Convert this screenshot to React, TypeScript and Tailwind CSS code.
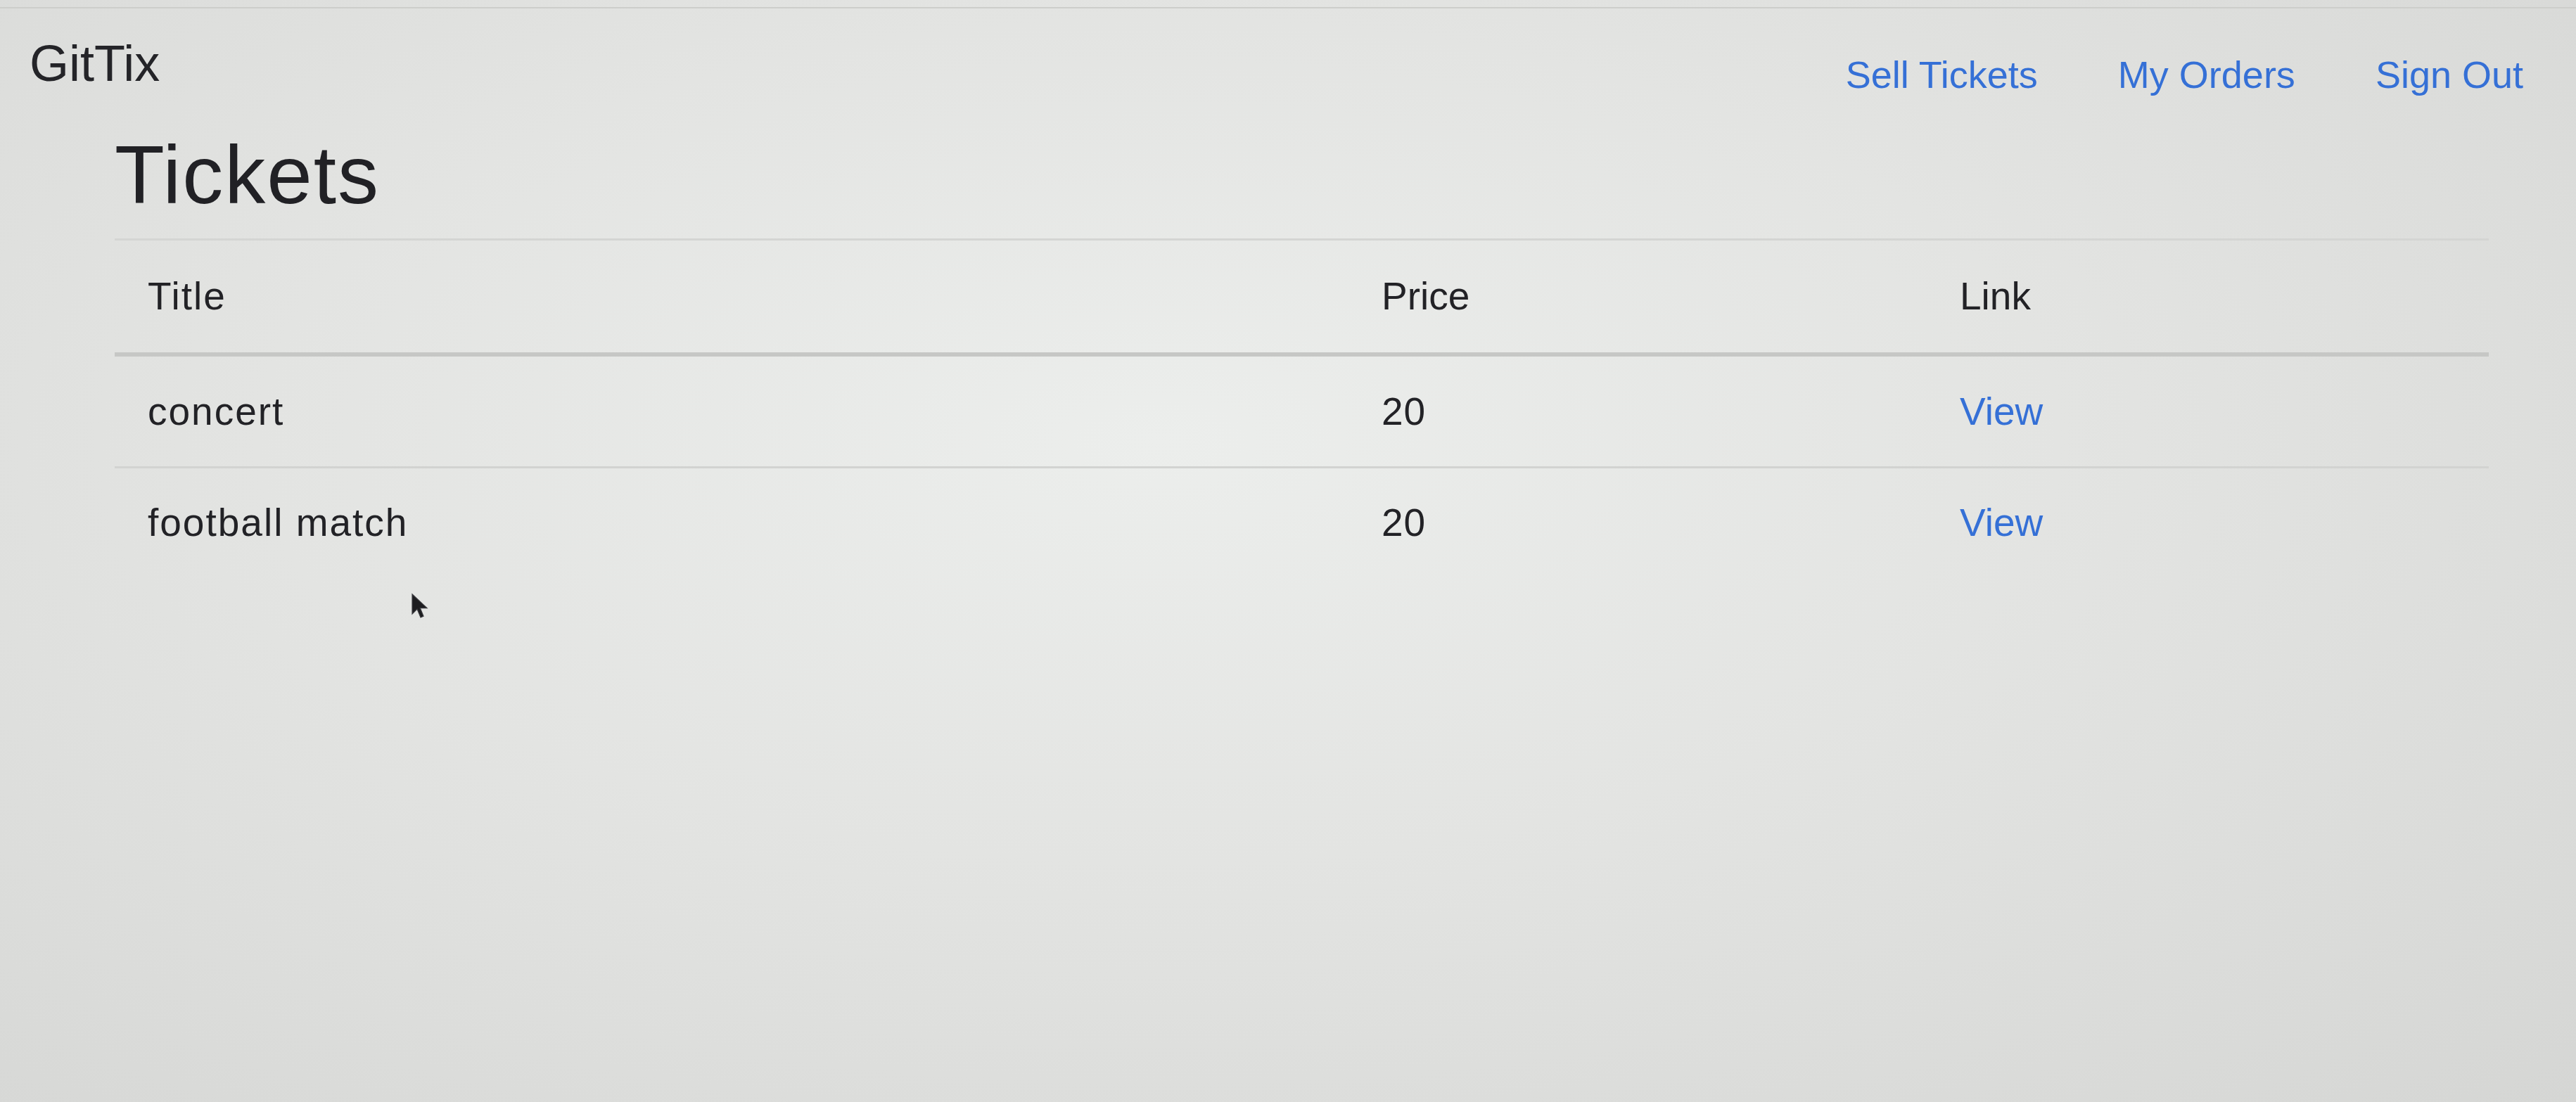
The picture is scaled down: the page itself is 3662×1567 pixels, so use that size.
import React from 'react'

const tickets = [
  { id: '1', title: 'concert', price: 20 },
  { id: '2', title: 'football match', price: 20 },
]

function Header() {
  return (
    <nav className="h-[161px] flex justify-between border-t-2 border-[#cdcecb]">
      <a className="pl-[42px] pt-[42px] text-[72px] leading-none text-[#242428]">GitTix</a>
      <ul className="flex gap-[114px] pr-[75px] pt-[67px]">
        <li><a className="text-[54px] leading-none text-[#3570d6]">Sell Tickets</a></li>
        <li><a className="text-[54px] leading-none text-[#3570d6]">My Orders</a></li>
        <li><a className="text-[54px] leading-none text-[#3570d6]">Sign Out</a></li>
      </ul>
    </nav>
  )
}

function Cursor() {
  return (
    <svg className="absolute left-[584px] top-[843px]" width="26" height="38" viewBox="0 0 13 19">
      <path d="M1 1 L1 15 L4.5 11.5 L7 17.5 L9 16.6 L6.6 10.8 L11.5 10.8 Z" fill="#1d1d20" stroke="#3a3a3e" strokeWidth="0.6" />
    </svg>
  )
}

export default function App() {
  return (
    <div
      className="relative w-[3662px] h-[1567px] overflow-hidden pt-[10px] bg-[radial-gradient(ellipse_at_45%_40%,#eceeec_0%,#e3e4e2_45%,#d5d6d4_100%)]"
      style={{ fontFamily: '"Liberation Sans", Arial, sans-serif' }}
    >
      <Header />
      <div className="ml-[163px] w-[3375px]">
        <h1 className="mt-[9px] text-[116px] leading-[1.2] tracking-[2px] text-[#212125]">Tickets</h1>
        <div className="mt-[20px] text-[55px] text-[#222226]">
          <div className="grid grid-cols-[1754px_822px_1fr] items-center h-[168px] border-t-[3px] border-b-[6px] border-t-[#d4d5d3] border-b-[#c6c7c5]">
            <div className="pl-[47px] tracking-[2px]">Title</div>
            <div className="pl-[47px]">Price</div>
            <div className="pl-[47px]">Link</div>
          </div>
          {tickets.map((t, i) => (
            <div
              key={t.id}
              className={
                i === 0
                  ? 'grid grid-cols-[1754px_822px_1fr] items-center h-[156px]'
                  : 'grid grid-cols-[1754px_822px_1fr] items-center h-[157px] border-t-[3px] border-[#d2d3d1]'
              }
            >
              <div className="pl-[47px] tracking-[2px]">{t.title}</div>
              <div className="pl-[47px] tracking-[1px]">{t.price}</div>
              <div className="pl-[47px]">
                <a className="text-[#3570d6]">View</a>
              </div>
            </div>
          ))}
        </div>
      </div>
      <Cursor />
    </div>
  )
}
